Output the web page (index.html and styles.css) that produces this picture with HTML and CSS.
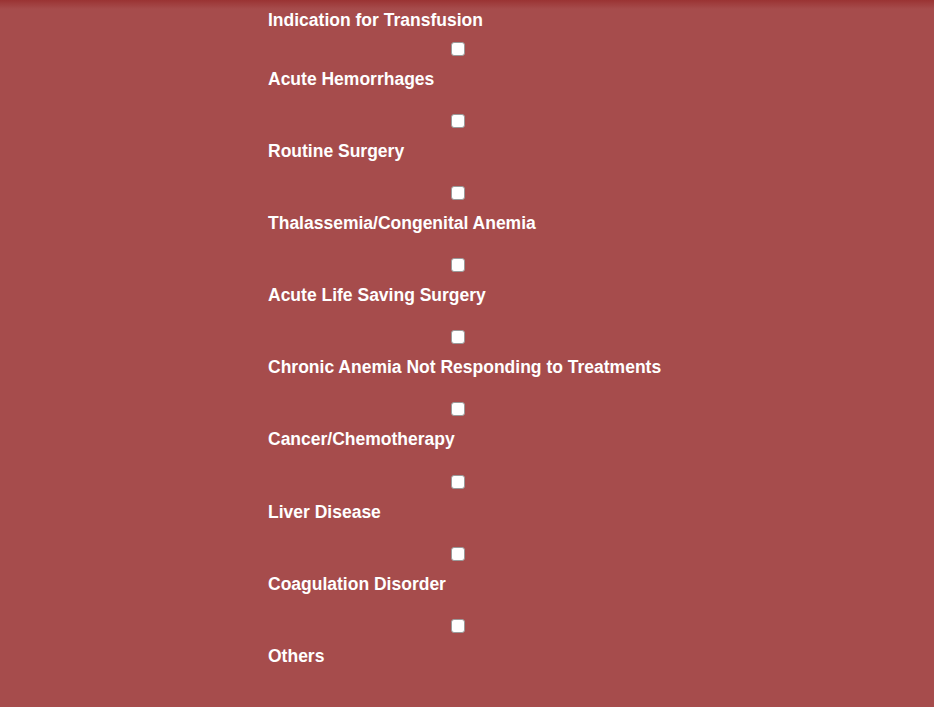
FILE: index.html
```html
<!DOCTYPE html>
<html>
<head>
<meta charset="utf-8">
<link rel="stylesheet" href="styles.css">
</head>
<body>
<div class="page">
  <form class="form">
    <div class="title">Indication for Transfusion</div>
    <div class="opt"><div class="cbrow"><input type="checkbox" class="cb"></div><div class="lbl">Acute Hemorrhages</div></div>
    <div class="opt"><div class="cbrow"><input type="checkbox" class="cb"></div><div class="lbl">Routine Surgery</div></div>
    <div class="opt"><div class="cbrow"><input type="checkbox" class="cb"></div><div class="lbl">Thalassemia/Congenital Anemia</div></div>
    <div class="opt"><div class="cbrow"><input type="checkbox" class="cb"></div><div class="lbl">Acute Life Saving Surgery</div></div>
    <div class="opt"><div class="cbrow"><input type="checkbox" class="cb"></div><div class="lbl">Chronic Anemia Not Responding to Treatments</div></div>
    <div class="opt"><div class="cbrow"><input type="checkbox" class="cb"></div><div class="lbl">Cancer/Chemotherapy</div></div>
    <div class="opt"><div class="cbrow"><input type="checkbox" class="cb"></div><div class="lbl">Liver Disease</div></div>
    <div class="opt"><div class="cbrow"><input type="checkbox" class="cb"></div><div class="lbl">Coagulation Disorder</div></div>
    <div class="opt"><div class="cbrow"><input type="checkbox" class="cb"></div><div class="lbl">Others</div></div>
  </form>
</div>
</body>
</html>
```

FILE: styles.css
```css
html, body {
  margin: 0;
  padding: 0;
  background: #a64c4c;
}
.page {
  min-height: 707px;
  background: linear-gradient(#9a3333 0px, #a64c4c 9px) no-repeat;
  background-color: #a64c4c;
  font-family: "Liberation Sans", Arial, sans-serif;
  color: #ffffff;
  font-weight: bold;
  font-size: 17.5px;
}
.form {
  margin: 0;
  padding: 10px 0 0 268px;
  width: 380px;
}
.title {
  line-height: 20px;
  margin-bottom: 11.5px;
}
.opt {
  height: 72.2px;
}
.cbrow {
  text-align: center;
  height: 14px;
}
.cb {
  -webkit-appearance: none;
  appearance: none;
  box-sizing: border-box;
  margin: 0;
  width: 14px;
  height: 14px;
  border: 1px solid #9a9a9a;
  border-radius: 3px;
  background: #ffffff;
  vertical-align: top;
}
.lbl {
  margin-top: 13px;
  line-height: 20px;
  white-space: nowrap;
}
```
